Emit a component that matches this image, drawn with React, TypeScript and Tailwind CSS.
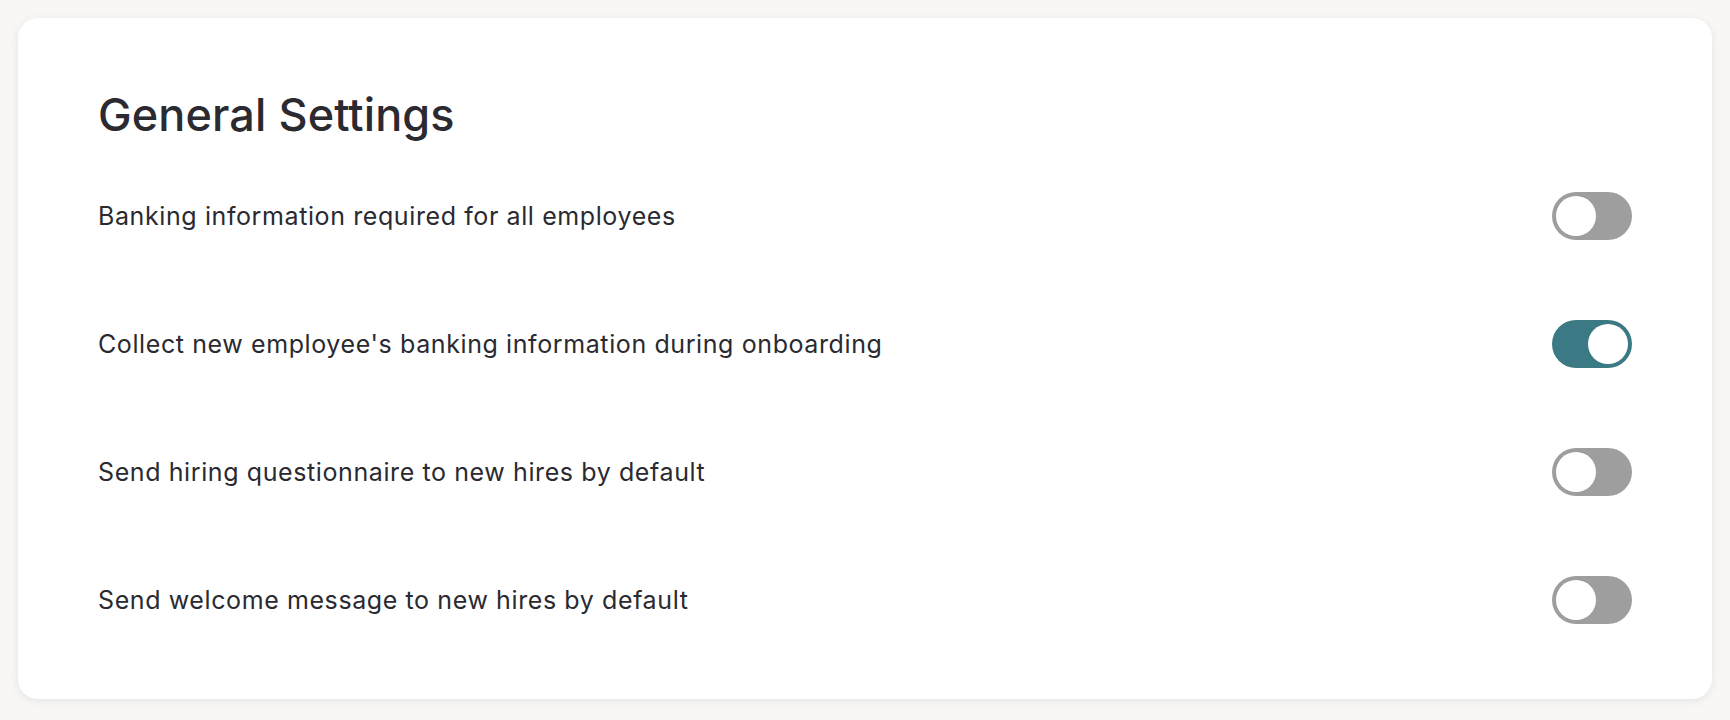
import { useState } from "react";

const settings = [
  { id: "banking-required", label: "Banking information required for all employees", on: false },
  { id: "collect-banking", label: "Collect new employee's banking information during onboarding", on: true },
  { id: "questionnaire", label: "Send hiring questionnaire to new hires by default", on: false },
  { id: "welcome", label: "Send welcome message to new hires by default", on: false },
];

function Toggle({ checked, onChange }: { checked: boolean; onChange: () => void }) {
  return (
    <button
      type="button"
      role="switch"
      aria-checked={checked}
      onClick={onChange}
      className={
        checked
          ? "flex h-[48px] w-[80px] shrink-0 items-center justify-end rounded-full bg-[#3b7a84] px-[4px]"
          : "flex h-[48px] w-[80px] shrink-0 items-center justify-start rounded-full bg-[#9e9e9e] px-[4px]"
      }
    >
      <span className="block h-[40px] w-[40px] rounded-full bg-white" />
    </button>
  );
}

export default function App() {
  const [values, setValues] = useState(settings.map((s) => s.on));

  const toggle = (i: number) => {
    setValues(values.map((v, j) => (j === i ? !v : v)));
  };

  return (
    <div className="min-h-screen bg-[#f8f7f5] px-[18px] pt-[18px] pb-[21px] font-['Inter',sans-serif] text-[#2a2a30]">
      <div className="rounded-[20px] bg-white px-20 pt-[70px] pb-[35px] shadow-[0_2px_10px_rgba(0,0,0,0.08)]">
        <h2 className="mb-[10px] text-[45px] leading-[54px] font-medium tracking-[0.1px]">General Settings</h2>
        {settings.map((s, i) => (
          <div key={s.id} className="flex h-[128px] items-center justify-between">
            <span className="text-[25px] leading-[32px] tracking-[0.6px]">{s.label}</span>
            <Toggle checked={values[i]} onChange={() => toggle(i)} />
          </div>
        ))}
      </div>
    </div>
  );
}
